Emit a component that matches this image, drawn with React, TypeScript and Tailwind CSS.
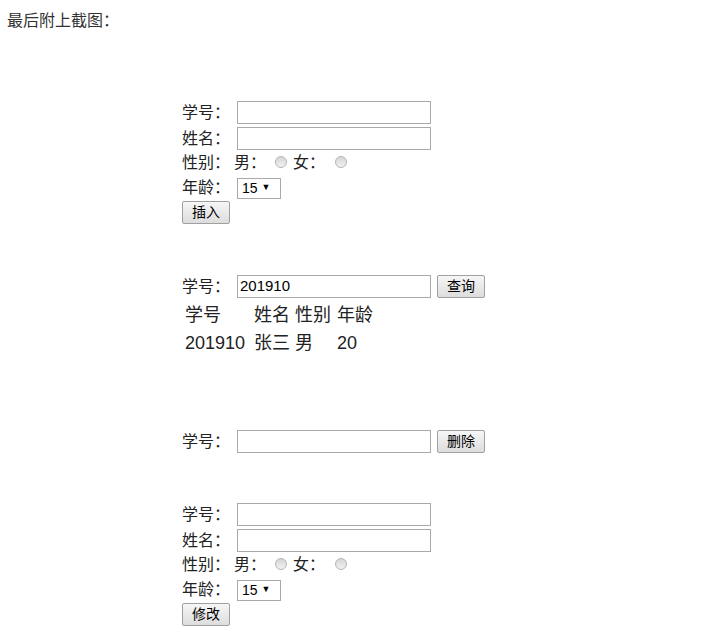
import React from 'react';

const font = { fontFamily: '"Liberation Sans", "Noto Sans CJK SC", sans-serif' };

const TextBox = ({ value = '' }: { value?: string }) => (
  <div className="w-[194px] h-[23px] border border-[#a9a9a9] bg-white flex items-center px-[2px] text-[15px] text-black">
    {value}
  </div>
);

const Btn = ({ label }: { label: string }) => (
  <div className="w-[48px] h-[23px] border border-[#a0a0a0] rounded-[2px] bg-gradient-to-b from-[#f6f6f6] to-[#dddddd] flex items-center justify-center text-[14px] text-black">
    {label}
  </div>
);

const Radio = () => (
  <span className="inline-block w-[12px] h-[12px] rounded-full border border-[#b5b5b5] bg-gradient-to-b from-[#d6d6d6] to-[#f2f2f2]" />
);

const Label = ({ text }: { text: string }) => (
  <span className="w-[55px] shrink-0">{text}</span>
);

const StudentForm = ({ action }: { action: string }) => (
  <div className="flex flex-col">
    <div className="flex items-center h-[23px]">
      <Label text="学号：" />
      <TextBox />
    </div>
    <div className="flex items-center h-[23px] mt-[3px]">
      <Label text="姓名：" />
      <TextBox />
    </div>
    <div className="flex items-center h-[26px]">
      <Label text="性别：" />
      <span className="ml-[-3px]">男：</span>
      <span className="ml-[9px]"><Radio /></span>
      <span className="ml-[6px]">女：</span>
      <span className="ml-[10px]"><Radio /></span>
    </div>
    <div className="flex items-center h-[24px]">
      <Label text="年龄：" />
      <div className="w-[44px] h-[21px] border border-[#a9a9a9] bg-white flex items-center pl-[4px] text-[14px] text-black">
        15<span className="ml-[4px] text-[9px]">▼</span>
      </div>
    </div>
    <div className="mt-[1px]">
      <Btn label={action} />
    </div>
  </div>
);

const App = () => {
  return (
    <div className="w-[726px] h-[644px] bg-white text-[16px] text-[#222] overflow-hidden" style={font}>
      <div className="pl-[7px] pt-[10px] leading-[22px] text-[#333]">最后附上截图：</div>

      <div className="ml-[182px] mt-[69px]">
        <StudentForm action="插入" />

        <div className="mt-[51px] flex items-center h-[23px]">
          <Label text="学号：" />
          <TextBox value="201910" />
          <div className="ml-[6px]"><Btn label="查询" /></div>
        </div>
        <div className="pl-[3px] mt-[3px] text-[18px]">
          <div className="flex h-[28px] items-center">
            <span className="w-[69px]">学号</span>
            <span className="w-[41px]">姓名</span>
            <span className="w-[42px]">性别</span>
            <span>年龄</span>
          </div>
          <div className="flex h-[28px] items-center">
            <span className="w-[69px]">201910</span>
            <span className="w-[41px]">张三</span>
            <span className="w-[42px]">男</span>
            <span>20</span>
          </div>
        </div>

        <div className="mt-[73px] flex items-center h-[23px]">
          <Label text="学号：" />
          <TextBox />
          <div className="ml-[6px]"><Btn label="删除" /></div>
        </div>

        <div className="mt-[50px]">
          <StudentForm action="修改" />
        </div>
      </div>
    </div>
  );
};

export default App;
